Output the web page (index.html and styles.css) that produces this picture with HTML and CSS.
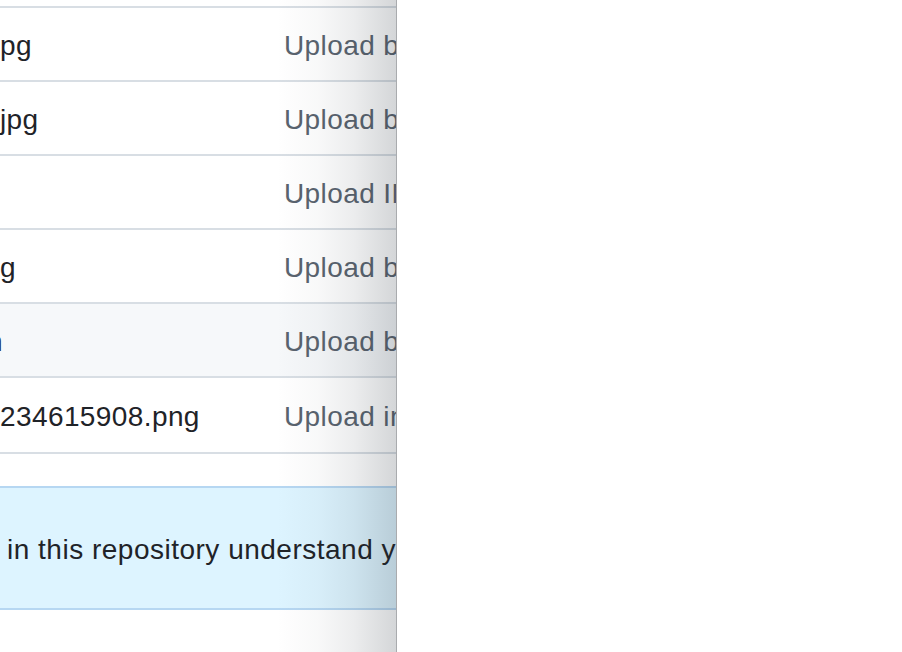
FILE: index.html
```html
<!DOCTYPE html>
<html lang="en">
<head>
<meta charset="utf-8">
<title>Files</title>
<link rel="stylesheet" href="styles.css">
</head>
<body>
<div class="stage">
  <section class="page">
    <div class="files">
      <div class="row"><span class="name">pg</span><span class="msg">Upload banner image</span></div>
      <div class="row"><span class="name">jpg</span><span class="msg">Upload background</span></div>
      <div class="row"><span class="name"></span><span class="msg">Upload IMG files</span></div>
      <div class="row"><span class="name">g</span><span class="msg">Upload banner</span></div>
      <div class="row row-muted"><span class="name name-cut">n</span><span class="msg">Upload build</span></div>
      <div class="row row-last"><span class="name">234615908.png</span><span class="msg">Upload images</span></div>
    </div>
    <div class="readme-hint">
      <p>in this repository understand your project by adding a README.</p>
    </div>
    <div class="shade"></div>
  </section>
  <section class="blank"></section>
</div>
</body>
</html>
```
FILE: styles.css
```css
html, body {
  margin: 0;
  padding: 0;
  background: #ffffff;
}
body {
  font-family: "Liberation Sans", Arial, sans-serif;
  font-size: 28px;
  letter-spacing: 0.4px;
  color: #1f2328;
}
.stage {
  display: flex;
  width: 902px;
  height: 652px;
  overflow: hidden;
}
.page {
  position: relative;
  width: 396px;
  flex: 0 0 396px;
  height: 652px;
  overflow: hidden;
  background: #ffffff;
  border-right: 1px solid #a9abae;
}
.blank {
  flex: 1;
  background: #ffffff;
}
.files {
  margin-top: 6px;
  width: 700px;
  border-top: 2px solid #d8dee4;
}
.row {
  display: flex;
  align-items: center;
  box-sizing: border-box;
  height: 74px;
  padding-top: 4px;
  border-bottom: 2px solid #d8dee4;
  white-space: nowrap;
}
.row-muted {
  background: #f6f8fa;
}
.row-last {
  height: 76px;
}
.name {
  width: 284px;
  flex: 0 0 284px;
  overflow: hidden;
  color: #1f2328;
}
.name-cut {
  text-indent: -13px;
  color: #2b3036;
}
.msg {
  color: #59636e;
}
.readme-hint {
  margin-top: 32px;
  width: 700px;
  box-sizing: border-box;
  height: 124px;
  padding-top: 4px;
  display: flex;
  align-items: center;
  background: #ddf4ff;
  border-top: 2px solid #b6d7f2;
  border-bottom: 2px solid #b6d7f2;
}
.readme-hint p {
  margin: 0;
  padding-left: 7px;
  letter-spacing: 0.5px;
  white-space: nowrap;
  color: #1f2328;
}
.shade {
  position: absolute;
  top: 0;
  right: 0;
  width: 120px;
  height: 100%;
  pointer-events: none;
  background: linear-gradient(to right,
    rgba(40, 50, 60, 0) 0%,
    rgba(40, 50, 60, 0.03) 35%,
    rgba(40, 50, 60, 0.09) 65%,
    rgba(40, 50, 60, 0.2) 100%);
}
```
